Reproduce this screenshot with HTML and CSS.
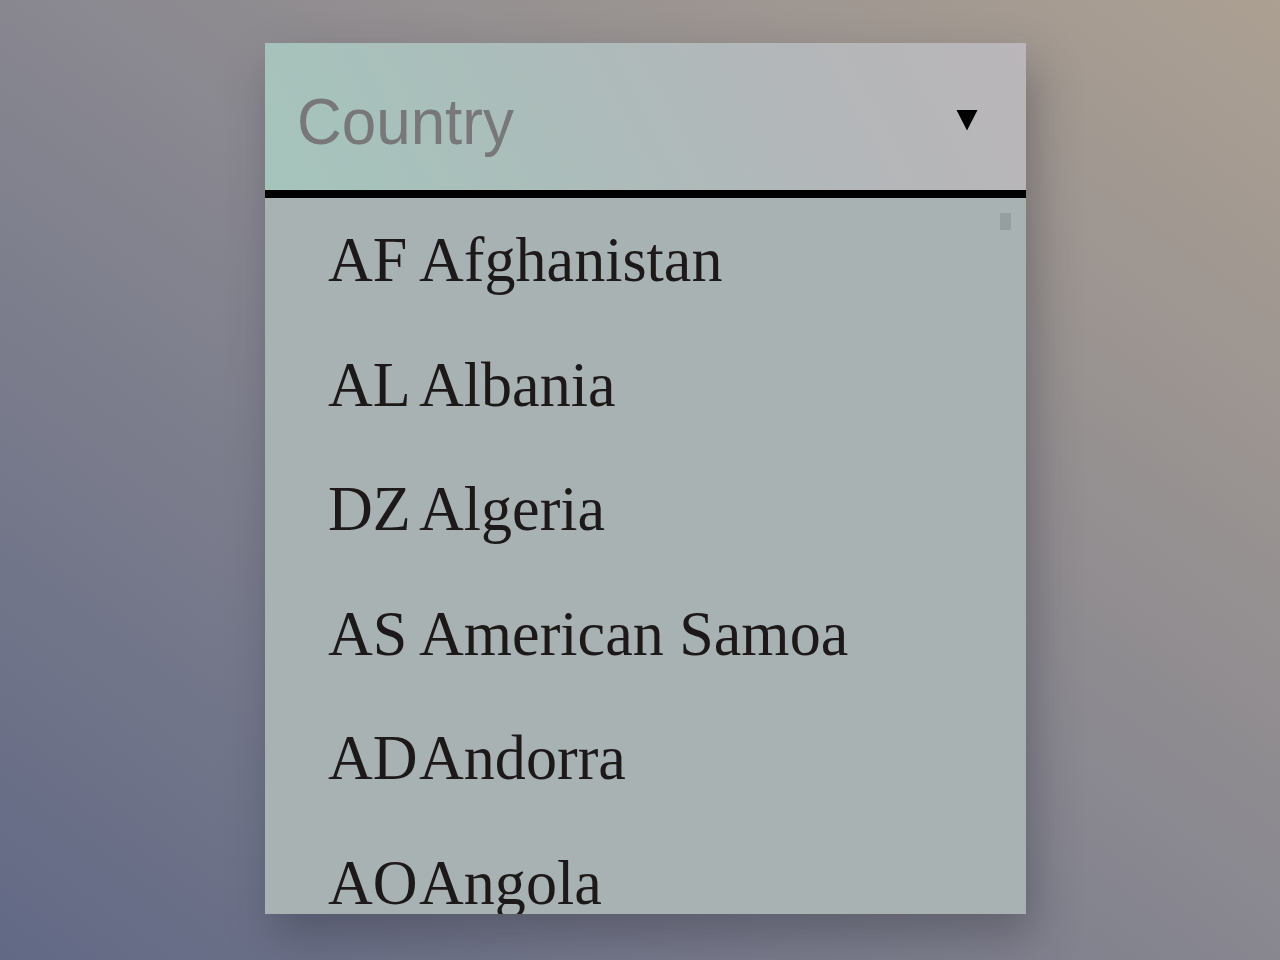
FILE: index.html
```html
<!DOCTYPE html>
<html lang="en">
<head>
<meta charset="utf-8">
<title>Country select</title>
<link rel="stylesheet" href="styles.css">
</head>
<body>
<main class="stage">
  <div class="select">
    <div class="select-head">
      <span class="placeholder">Country</span>
      <svg class="caret" width="22" height="21" viewBox="0 0 22 21" aria-hidden="true"><polygon points="0.5,0 21.5,0 11,20.5" fill="#000"/></svg>
    </div>
    <ul class="options">
      <li class="option"><span class="code"><span class="txt">AF</span></span><span class="txt">Afghanistan</span></li>
      <li class="option"><span class="code"><span class="txt">AL</span></span><span class="txt">Albania</span></li>
      <li class="option"><span class="code"><span class="txt">DZ</span></span><span class="txt">Algeria</span></li>
      <li class="option"><span class="code"><span class="txt">AS</span></span><span class="txt">American Samoa</span></li>
      <li class="option"><span class="code"><span class="txt">AD</span></span><span class="txt">Andorra</span></li>
      <li class="option"><span class="code"><span class="txt">AO</span></span><span class="txt">Angola</span></li>
    </ul>
    <div class="thumb"></div>
  </div>
</main>
</body>
</html>
```

FILE: styles.css
```css
html, body {
  margin: 0;
  padding: 0;
  height: 100%;
}

body {
  background: linear-gradient(to top right, #626985 0%, #888790 50%, #aca092 100%);
  font-family: "Liberation Serif", "Times New Roman", serif;
}

.stage {
  height: 960px;
  padding: 43px 0 0 265px;
  box-sizing: border-box;
}

.select {
  position: relative;
  width: 761px;
  height: 871px;
  display: flex;
  flex-direction: column;
  box-shadow: 8px 22px 42px rgba(40, 40, 55, 0.35);
}

.select-head {
  flex: none;
  height: 137px;
  padding: 10px 48px 0 32px;
  display: flex;
  align-items: center;
  justify-content: space-between;
  background: linear-gradient(62deg, #a5c4bc 0%, #abbdba 35%, #b3b7b9 68%, #bab6b9 100%);
  border-bottom: 8px solid #000;
}

.placeholder {
  font-family: "Liberation Sans", Arial, sans-serif;
  font-size: 64px;
  color: #787878;
  display: inline-block;
  transform: scaleX(0.968);
  transform-origin: left center;
}

.caret {
  display: block;
  margin-top: -3px;
}

.options {
  list-style: none;
  margin: 0;
  padding: 0 0 0 63px;
  flex: 1;
  overflow: hidden;
  background: #a9b2b3;
}

.option {
  display: flex;
  height: 124.6px;
  line-height: 124.6px;
  font-size: 64px;
  color: #1d1919;
  white-space: nowrap;
}

.code {
  width: 91px;
  flex: none;
}

.txt {
  display: inline-block;
  transform: scaleX(0.97);
  transform-origin: left center;
}

.thumb {
  position: absolute;
  left: 735px;
  top: 170px;
  width: 11px;
  height: 17px;
  background: #979e9e;
}
```
